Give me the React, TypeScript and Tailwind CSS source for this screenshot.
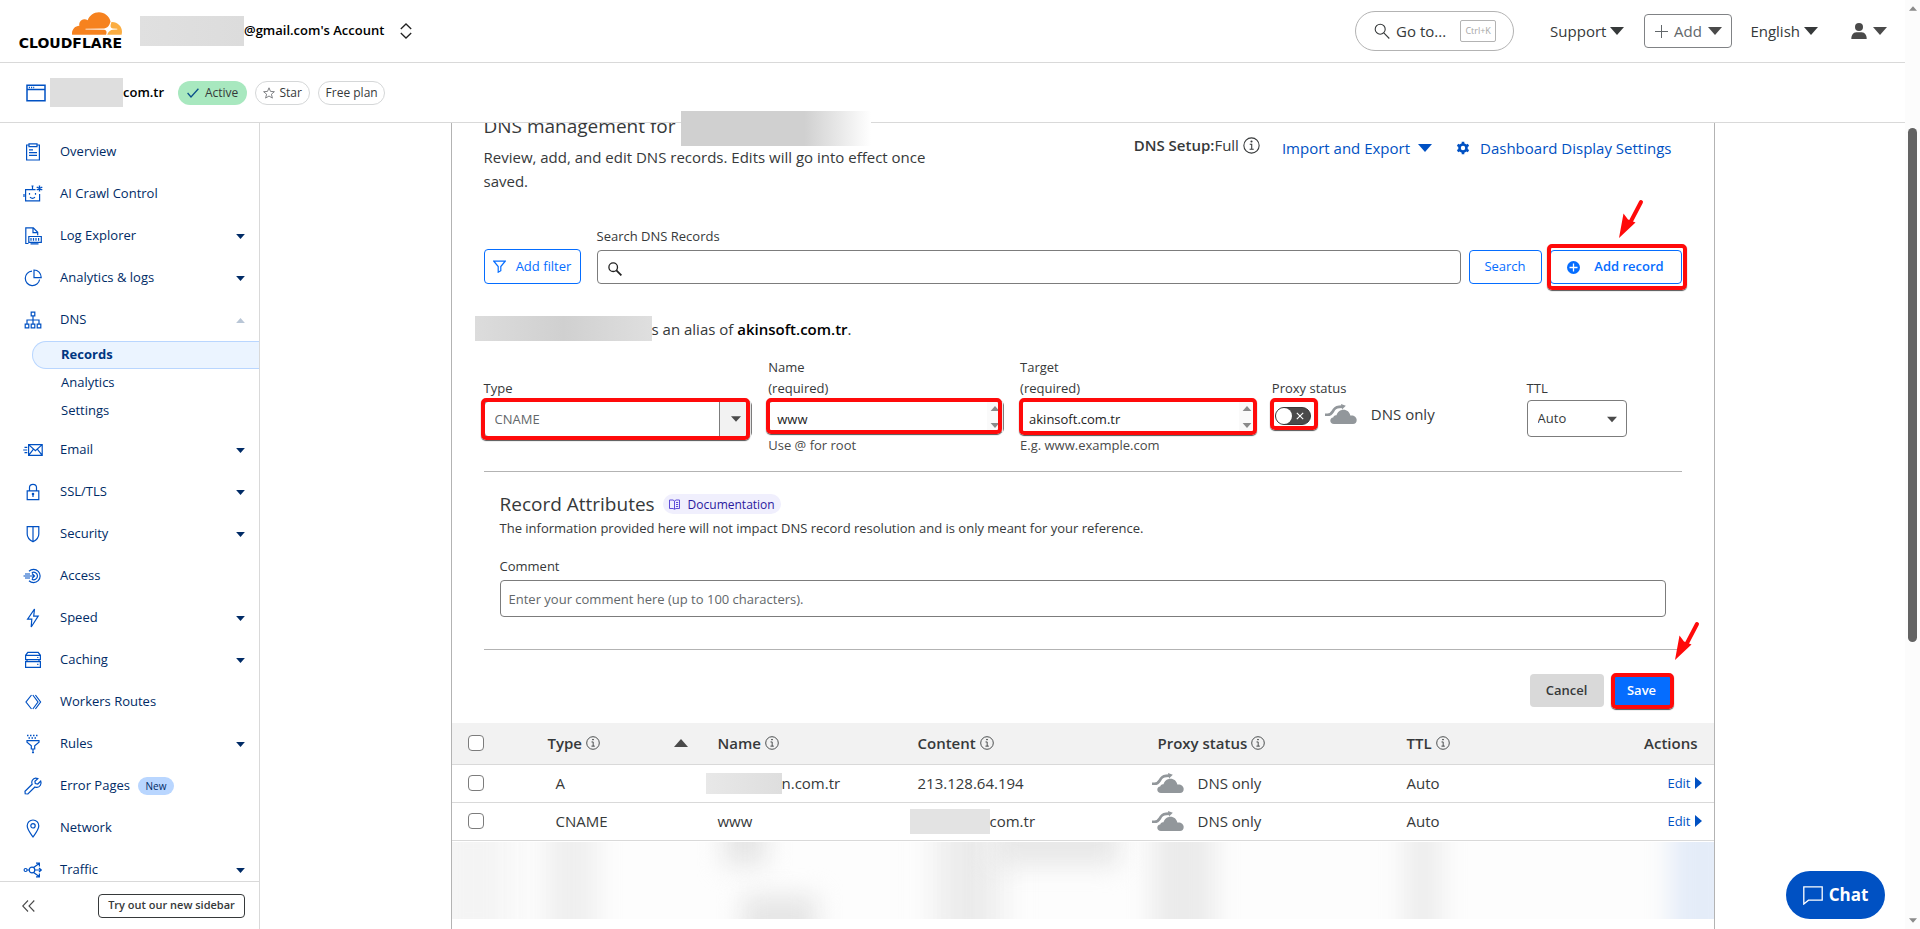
import { useState, type ReactNode } from 'react'
import { clsx } from 'clsx'

interface NavItem {
  label: string
  icon: ReactNode
  expandable?: boolean
  open?: boolean
  badge?: string
  children?: string[]
}

interface DnsRecord {
  id: string
  type: string
  name: ReactNode
  content: ReactNode
}

/* ---------- Small shared drawings ---------- */

function Caret({ className, up }: { className?: string; up?: boolean }) {
  return (
    <svg viewBox="0 0 14 8" className={clsx('shrink-0 fill-current', className)} aria-hidden="true">
      {up ? <path d="M0 8h14L7 0z" /> : <path d="M0 0h14L7 8z" />}
    </svg>
  )
}

function InfoIcon({ className }: { className?: string }) {
  return (
    <svg viewBox="0 0 16 16" className={clsx('shrink-0', className)} fill="none" stroke="currentColor" aria-hidden="true">
      <circle cx="8" cy="8" r="7.2" />
      <path d="M6.3 6.8h1.9v4.8M6.2 11.6h3.9" />
      <circle cx="8" cy="4.2" r="0.5" fill="currentColor" />
    </svg>
  )
}

function DnsOnlyCloud() {
  return (
    <svg viewBox="0 0 32 21" className="h-[21px] w-8 shrink-0" aria-hidden="true">
      <path
        fill="#92979b"
        d="M9 20c-2.300 0-3.700-1.300-3.700-3.200 0-1.700 1.100-3 2.900-3.200.2-1.500 1.600-2.600 3.300-2.300C12.500 8 15.200 5.800 18.500 5.800c3.500 0 6.200 2.300 6.800 5.700 3.300-.6 6.400 1.200 6.400 4.500 0 2.500-1.500 4-3.700 4z"
      />
      <path fill="none" stroke="#fff" strokeWidth="4.600" d="M4 10.400c3-.6 3.600-2.800 5-4.900C10.600 3.200 12.600 2.600 17 2.600" />
      <path fill="none" stroke="#92979b" strokeWidth="2.600" d="M0 10.800h2.500c4.500 0 4.700-2.800 6.500-5.300C10.600 3.200 12.600 2.600 17 2.600" />
      <path fill="#92979b" d="M16 0l4.800 1.800L17 5.600z" />
    </svg>
  )
}

function Redacted({ className }: { className?: string }) {
  return <span aria-hidden="true" className={clsx('block shrink-0', className)} />
}

function RedArrow({ className }: { className?: string }) {
  return (
    <svg viewBox="0 0 26 40" className={clsx('pointer-events-none absolute h-10 w-[26px]', className)} aria-hidden="true">
      <path d="M23 3L12 24" stroke="#ff0a0a" strokeWidth="4" strokeLinecap="round" />
      <path d="M1 39L5.500 14.500l4.500 6 7.500 3z" fill="#ff0a0a" />
    </svg>
  )
}

// Red frame drawn around a control
function Marked({ children, className, frame }: { children: ReactNode; className?: string; frame: string }) {
  return (
    <div className={clsx('relative', className)}>
      {children}
      <span
        aria-hidden="true"
        className={clsx('pointer-events-none absolute rounded-[5px] border-4 border-[#ff0a0a] shadow-[0_1px_1px_#555]', frame)}
      />
    </div>
  )
}

function Glyph({ children }: { children: ReactNode }) {
  return (
    <svg
      viewBox="0 0 20 20"
      className="size-5 shrink-0"
      fill="none"
      stroke="#0051c3"
      strokeWidth="1.2"
      aria-hidden="true"
    >
      {children}
    </svg>
  )
}

/* ---------- Sidebar data ---------- */

const navItems: NavItem[] = [
  {
    label: 'Overview',
    icon: (
      <Glyph>
        <path d="M6 3H3.600v15h12.800V3H14M6 1.800h8v2.800H6zM6 7.800h4M6 10.600h8M6 13.400h8" />
      </Glyph>
    ),
  },
  {
    label: 'AI Crawl Control',
    icon: (
      <Glyph>
        <path d="M12.500 5.600H2.600v11.200h14V10M9.500 5.600V2M8.500 2h2M6.500 9v1.800M12.500 9v1.800M7 13.300c1.500 1.200 3.500 1.200 5 0M1 10v3" />
        <path d="M16.500 1.500v6M13.700 3l5.600 3M19.300 3l-5.600 3" strokeWidth="1.400" />
      </Glyph>
    ),
  },
  {
    label: 'Log Explorer',
    expandable: true,
    icon: (
      <Glyph>
        <path d="M5.500 17.500H2.800V1.800h7.500l4.400 4.500v3M10 2v4.600h4.500M5.800 10.500h12.500v5.800H5.800zM7.500 17.800h8M8 12v2.800M10.500 12v2.800M13 12v2.800M15.600 12v2.800" />
      </Glyph>
    ),
  },
  {
    label: 'Analytics & logs',
    expandable: true,
    icon: (
      <Glyph>
        <path d="M9 3.200a7.200 7.200 0 1 0 7.600 8.300M11 2v7.600h7.200C18.200 5.200 15 2 11 2z" />
      </Glyph>
    ),
  },
  {
    label: 'DNS',
    expandable: true,
    open: true,
    children: ['Records', 'Analytics', 'Settings'],
    icon: (
      <Glyph>
        <path d="M8.200 2.200h3.600v3.600H8.200zM2.200 14.200h3.600v3.600H2.200zM8.200 14.200h3.600v3.600H8.200zM14.200 14.200h3.600v3.600h-3.600zM10 5.800v8.400M4 14.200V10h12v4.200" />
      </Glyph>
    ),
  },
  {
    label: 'Email',
    expandable: true,
    icon: (
      <Glyph>
        <path d="M5.600 4.600h13.600v10.800H5.600zM5.600 4.600l6.800 6 6.800-6M5.600 15.400l4.700-6M19.200 15.400l-4.700-6M1.500 7.300h2.800M0.200 10h4M1.500 12.700h2.800" />
      </Glyph>
    ),
  },
  {
    label: 'SSL/TLS',
    expandable: true,
    icon: (
      <Glyph>
        <path d="M4.200 8.800h11.600v8.800H4.200zM6.500 8.800V5.600c0-4.400 7-4.400 7 0v3.200M10 12v3" />
        <circle cx="10" cy="12" r="0.700" fill="#0051c3" />
      </Glyph>
    ),
  },
  {
    label: 'Security',
    expandable: true,
    icon: (
      <Glyph>
        <path d="M4.200 2.600h11.600v7.400c0 3.600-2.600 6.200-5.800 7.800-3.200-1.600-5.800-4.200-5.800-7.800zM10 2.600v15" />
      </Glyph>
    ),
  },
  {
    label: 'Access',
    icon: (
      <Glyph>
        <path d="M6 5.200a6.600 6.600 0 1 1 0 9.600M8.800 6.700a3.800 3.800 0 1 1 0 6.600M0.500 10h11M9 7.500l2.500 2.500L9 12.500M2 8h5M2 12h5" />
      </Glyph>
    ),
  },
  {
    label: 'Speed',
    expandable: true,
    icon: (
      <Glyph>
        <path d="M11.500 1L4.600 11.200h4.200L8.200 19l7-10.800h-4.500z" />
      </Glyph>
    ),
  },
  {
    label: 'Caching',
    expandable: true,
    icon: (
      <Glyph>
        <path d="M2.600 9.600V5.300l2.200-2.900h10.400l2.200 2.900v4.300zM2.600 5.300h14.800M2.600 11.600h14.800v5.800H2.600zM4 9.600v2M16 9.600v2M14.800 7v1M14.800 13.800v1.200" />
      </Glyph>
    ),
  },
  {
    label: 'Workers Routes',
    icon: (
      <Glyph>
        <path d="M8.500 3L3 10l5.500 7M9.800 3l5.200 7-5.200 7M12.400 3l5.200 7-5.200 7" />
      </Glyph>
    ),
  },
  {
    label: 'Rules',
    expandable: true,
    icon: (
      <Glyph>
        <path d="M4 1.500h12M5.500 4h9" strokeDasharray="1.500 1.500" strokeWidth="1.500" />
        <path d="M4 6.600h12v1.600l-4.300 3.600v3.200H8.300v-3.200L4 8.200zM10 15.500V17" />
        <circle cx="10" cy="18.300" r="1.100" fill="#0051c3" stroke="none" />
      </Glyph>
    ),
  },
  {
    label: 'Error Pages',
    badge: 'New',
    icon: (
      <Glyph>
        <path d="M14.800 2.600c-2-.9-4.400-.2-5.500 1.700-.7 1.300-.8 2.700-.2 4L2 15.200l.2 2.600 2.700.2 7-7c2 .8 4.300.2 5.500-1.700.8-1.300.9-2.800.3-4.200l-2.900 2.900-2.500-.4-.4-2.400z" />
      </Glyph>
    ),
  },
  {
    label: 'Network',
    icon: (
      <Glyph>
        <path d="M10 19c-3-4.200-5.800-7.600-5.800-11.200a5.800 5.800 0 0 1 11.600 0C15.800 11.400 13 14.800 10 19z" />
        <circle cx="10" cy="7.800" r="2.200" />
      </Glyph>
    ),
  },
  {
    label: 'Traffic',
    expandable: true,
    icon: (
      <Glyph>
        <circle cx="2.600" cy="10" r="1.500" />
        <circle cx="9" cy="10" r="2.800" />
        <path d="M4.100 10h2M11.800 10h6.500M16 8l2.300 2L16 12M10.600 7.600L16.200 3.400M10.600 12.400l5.600 4.200M13 3.200h3.400v3.200M13 16.800h3.400v-3.200" />
      </Glyph>
    ),
  },
]

const records: DnsRecord[] = [
  {
    id: 'root-a',
    type: 'A',
    name: (
      <span className="-ml-3 flex items-center">
        <Redacted className="h-[21px] w-[76px] bg-linear-to-r from-[#e8e8e8] to-[#dedede]" />
        n.com.tr
      </span>
    ),
    content: '213.128.64.194',
  },
  {
    id: 'www-cname',
    type: 'CNAME',
    name: 'www',
    content: (
      <span className="-ml-2 flex items-center">
        <Redacted className="h-[25px] w-20 bg-[#e3e3e3]" />
        com.tr
      </span>
    ),
  },
]

/* ---------- Header ---------- */

function CloudflareLogo() {
  return (
    <a href="#home" aria-label="Cloudflare" className="flex w-[105px] flex-col items-end">
      <svg viewBox="0 6.500 24 11" className="h-[23px] w-[50px]" aria-hidden="true">
        <path
          fill="#f6821f"
          d="M16.5088 16.8447c.1475-.5068.0908-.9707-.1553-1.3154-.2246-.3164-.6045-.499-1.0615-.5205l-8.6592-.1123a.1559.1559 0 0 1-.1333-.0713c-.0283-.042-.0351-.0986-.021-.1553.0278-.084.1123-.1484.2036-.1562l8.7359-.1123c1.0351-.0489 2.1601-.8868 2.5537-1.9136l.499-1.3013c.0215-.0561.0293-.1128.0147-.168-.5625-2.5463-2.835-4.4453-5.5499-4.4453-2.5039 0-4.6284 1.6177-5.3876 3.8614-.4927-.3658-1.1187-.5625-1.794-.499-1.2026.119-2.1665 1.083-2.2861 2.2856-.0283.31-.0069.6128.0635.894C1.5683 13.171 0 14.7754 0 16.752c0 .1748.0142.3515.0352.5273.0141.083.0844.1475.1689.1475h15.9814c.0909 0 .1758-.0645.2032-.1553z"
        />
        <path
          fill="#fbad41"
          d="M19.2656 11.2813c-.0771 0-.1611 0-.2383.0112-.0566 0-.1054.0415-.127.0976l-.3378 1.1744c-.1475.5068-.0918.9707.1543 1.3164.2256.3164.6055.498 1.0625.5195l1.8437.1133c.0557 0 .1055.0263.1329.0703.0283.043.0351.1074.0214.1562-.0283.084-.1132.1485-.204.1553l-1.921.1123c-1.041.0488-2.1582.8867-2.5527 1.914l-.1406.3585c-.0283.0713.0215.1416.0986.1416h6.5977c.0771 0 .1474-.0489.169-.126.1122-.4082.1757-.837.1757-1.2803 0-2.6025-2.125-4.727-4.7344-4.727z"
        />
      </svg>
      <span className="mt-px font-['DejaVu_Sans',sans-serif] text-[14px] leading-[14px] font-bold text-black">CLOUDFLARE</span>
    </a>
  )
}

function TopBar() {
  return (
    <header className="flex h-[63px] shrink-0 items-center border-b border-[#d9d9d9] pr-[18px] pl-[17px]">
      <CloudflareLogo />
      <button type="button" className="ml-[18px] flex items-center text-[13px] font-semibold text-black">
        <Redacted className="h-[30px] w-[104px] bg-linear-to-r from-[#e0e0e0] to-[#dcdcdc]" />
        @gmail.com's Account
        <svg viewBox="0 0 12 16" className="ml-4 h-4 w-3" fill="none" stroke="#222" strokeWidth="1.300" aria-hidden="true">
          <path d="M0.800 6L6 1l5.200 5M0.800 10L6 15l5.200-5" />
        </svg>
      </button>

      <div className="ml-auto flex items-center text-[15px] text-[#36393a]">
        <button
          type="button"
          className="flex h-10 w-[159px] items-center rounded-full border border-[#b3b3b3] pl-[18px]"
        >
          <svg viewBox="0 0 16 16" className="mr-1.5 size-4" fill="none" stroke="#36393a" strokeWidth="1.100" aria-hidden="true">
            <circle cx="6.200" cy="6.200" r="5" />
            <path d="M9.800 9.800L15.300 15.500" />
          </svg>
          Go to...
          <kbd className="ml-3.5 flex h-[22px] w-9 items-center justify-center rounded-xs border border-[#b3b3b3] font-['Open_Sans',sans-serif] text-[9px] text-[#a6a6a6]">
            Ctrl+K
          </kbd>
        </button>
        <button type="button" className="ml-9 flex items-center gap-1">
          Support
          <Caret className="h-2 w-3.5" />
        </button>
        <button
          type="button"
          className="ml-5 flex h-[34px] w-[88px] items-center justify-center gap-1.5 rounded-sm border border-[#808285] text-[#62676a]"
        >
          <svg viewBox="0 0 13 13" className="size-[13px]" stroke="currentColor" aria-hidden="true">
            <path d="M6.500 0v13M0 6.500h13" />
          </svg>
          Add
          <Caret className="h-2 w-3.5 text-[#4a4a4a]" />
        </button>
        <button type="button" className="ml-[18px] flex items-center gap-1">
          English
          <Caret className="h-2 w-3.5" />
        </button>
        <button type="button" aria-label="Profile" className="ml-[33px] flex items-center gap-1.5 text-[#4a4a4a]">
          <svg viewBox="0 0 16 16" className="size-4 fill-current" aria-hidden="true">
            <circle cx="8" cy="4" r="4" />
            <path d="M0.300 16c0-4 1.800-6.500 5-6.700h5.400c3.200.2 5 2.700 5 6.700z" />
          </svg>
          <Caret className="h-2 w-3.5" />
        </button>
      </div>
    </header>
  )
}

function ZoneBar() {
  return (
    <div className="flex h-[60px] shrink-0 items-center border-b border-[#d9d9d9] pl-[26px] text-[#36393a]">
      <svg viewBox="0 0 20 18" className="h-[18px] w-5" fill="none" stroke="#0051c3" strokeWidth="1.500" aria-hidden="true">
        <path d="M1 1.200h18v15.600H1zM1 5.600h18" />
        <path d="M2.800 3.400h5.400" strokeDasharray="1.200 1" />
      </svg>
      <Redacted className="ml-1 h-[29px] w-[73px] bg-[#dedede]" />
      <h2 className="text-[13px] font-semibold text-black">com.tr</h2>
      <span className="ml-3.5 flex h-6 w-[69px] items-center justify-center gap-1.5 rounded-full bg-[#a8e8bf] text-[12px]">
        <svg viewBox="0 0 12 10" className="h-2.5 w-3" fill="none" stroke="#0b4f8a" strokeWidth="1.300" aria-hidden="true">
          <path d="M0.600 5l3.400 4L11.400 0.800" />
        </svg>
        Active
      </span>
      <button
        type="button"
        className="ml-2 flex h-6 w-[55px] items-center justify-center gap-1 rounded-full border border-[#d5d7d8] text-[12px]"
      >
        <svg viewBox="0 0 12 12" className="size-3" fill="none" stroke="#808285" aria-hidden="true">
          <path d="M6 0.800l1.500 3.600 3.900.3-3 2.500 1 3.900L6 9l-3.400 2.100 1-3.900-3-2.500 3.900-.3z" />
        </svg>
        Star
      </button>
      <span className="ml-2 flex h-6 w-[67px] items-center justify-center rounded-full border border-[#d5d7d8] text-[12px]">
        Free plan
      </span>
    </div>
  )
}

/* ---------- Sidebar ---------- */

function Sidebar() {
  return (
    <aside className="flex w-[260px] shrink-0 flex-col border-r border-[#d9d9d9] text-[13px] text-[#003681]">
      <nav className="min-h-0 flex-1 overflow-hidden pt-2">
        <ul>
          {navItems.map((item) => (
            <li key={item.label}>
              <a href="#nav" className="flex h-[42px] items-center pr-3.5 pl-[23px] text-[#002b66]">
                {item.icon}
                <span className="ml-[17px]">{item.label}</span>
                {item.badge && (
                  <span className="ml-2 flex h-[18px] w-9 items-center justify-center rounded-full bg-[#b9d6ff] text-[10px]">
                    {item.badge}
                  </span>
                )}
                {item.expandable && (
                  <Caret up={item.open} className={clsx('ml-auto h-[5px] w-[9px]', item.open && 'text-[#b9c6d6]')} />
                )}
              </a>
              {item.children && (
                <ul className="mb-1">
                  {item.children.map((child, i) => (
                    <li key={child} className="pl-8">
                      <a
                        href="#nav"
                        aria-current={i === 0 ? 'page' : undefined}
                        className={clsx(
                          'flex h-7 items-center border pl-7',
                          i === 0
                            ? 'rounded-l-full border-r-0 border-[#b9d6ff] bg-[#ebf4ff] font-bold text-[#003681]'
                            : 'border-transparent text-[#002b66]'
                        )}
                      >
                        {child}
                      </a>
                    </li>
                  ))}
                </ul>
              )}
            </li>
          ))}
        </ul>
      </nav>
      <div className="flex h-12 shrink-0 items-center justify-between border-t border-[#d9d9d9] pr-3.5 pl-[22px]">
        <button type="button" aria-label="Collapse sidebar">
          <svg viewBox="0 0 13 12" className="h-3 w-[13px]" fill="none" stroke="#4a4a4a" strokeWidth="1.100" aria-hidden="true">
            <path d="M6 0.500L0.700 6 6 11.500M12.300 0.500L7 6l5.300 5.500" />
          </svg>
        </button>
        <button type="button" className="h-6 w-[147px] rounded-sm border border-[#36393a] text-[11px] font-semibold text-[#36393a]">
          Try out our new sidebar
        </button>
      </div>
    </aside>
  )
}

/* ---------- DNS page ---------- */

function IntroRow() {
  return (
    <div className="flex items-start justify-between">
      <div className="w-[472px]">
        <h1 className="text-[19px] leading-7">DNS management for</h1>
        <p className="mt-[5px] mb-px text-[15px] leading-6">
          Review, add, and edit DNS records. Edits will go into effect once saved.
        </p>
      </div>
      <div className="flex items-center pt-[21px] pr-2.5 text-[15px] leading-6">
        <span className="flex items-center pb-1.5">
          <span className="font-semibold">DNS Setup:</span>Full
          <InfoIcon className="ml-1 size-[17px]" />
        </span>
        <button type="button" className="ml-[22px] flex items-center text-[#0051c3]">
          Import and Export
          <Caret className="ml-2 h-2 w-3.5" />
        </button>
        <a href="#display" className="ml-6 flex items-center text-[#0051c3]">
          <svg viewBox="0 0 14 14" className="mr-2.5 size-3.5" aria-hidden="true">
            <circle cx="7" cy="7" r="3.500" fill="none" stroke="currentColor" strokeWidth="2.600" />
            <path
              d="M7 0.700v2.500M7 10.800v2.500M1.500 3.800l2.200 1.300M10.300 8.900l2.200 1.300M1.500 10.200l2.200-1.300M10.300 5.100l2.200-1.300"
              stroke="currentColor"
              strokeWidth="2.600"
            />
          </svg>
          Dashboard Display Settings
        </a>
      </div>
    </div>
  )
}

function SearchRow() {
  return (
    <form className="mt-8 flex items-end" onSubmit={(e) => e.preventDefault()}>
      <button
        type="button"
        className="flex h-[35px] w-[97px] items-center justify-center gap-2.5 rounded-sm border border-[#056dff] text-[13px] text-[#056dff]"
      >
        <svg viewBox="0 0 13 13" className="size-[13px]" fill="none" stroke="currentColor" strokeWidth="1.200" aria-hidden="true">
          <path d="M0.800 1.200h11.400L7.800 6.500v4.200l-2.600 1.500V6.500z" />
        </svg>
        Add filter
      </button>
      <div className="ml-4 flex-1">
        <label htmlFor="dns-search" className="mb-1 block text-[13px] leading-5">
          Search DNS Records
        </label>
        <div className="relative">
          <input
            id="dns-search"
            type="text"
            className="block h-[34px] w-full rounded-sm border border-[#7c7c7c] pr-3 pl-8 text-[13px] outline-none"
          />
          <svg
            viewBox="0 0 14 14"
            className="pointer-events-none absolute top-3 left-[11px] size-3.5"
            fill="none"
            stroke="#222"
            strokeWidth="1.300"
            aria-hidden="true"
          >
            <circle cx="5.200" cy="5.200" r="4.300" />
            <path d="M8.400 8.400l5 5" strokeWidth="1.800" />
          </svg>
        </div>
      </div>
      <button type="submit" className="ml-2 h-[34px] w-[73px] rounded-sm border border-[#056dff] text-[13px] text-[#056dff]">
        Search
      </button>
      <Marked className="ml-2" frame="-right-[5px] -left-[3px] -top-[6px] -bottom-[6px]">
        <button
          type="button"
          className="flex h-[34px] w-[132px] items-center justify-center gap-3.5 rounded-sm border border-[#056dff] text-[13px] font-semibold text-[#056dff]"
        >
          <svg viewBox="0 0 13 13" className="size-[13px]" aria-hidden="true">
            <circle cx="6.500" cy="6.500" r="6.500" fill="currentColor" />
            <path d="M6.500 2.500v8M2.500 6.500h8" stroke="#fff" strokeWidth="1.300" />
          </svg>
          Add record
        </button>
        <RedArrow className="-top-[51px] left-[68px]" />
      </Marked>
    </form>
  )
}

// Multi-line field with its own tiny scroll arrows
function ScrollField({ id, defaultValue }: { id: string; defaultValue: string }) {
  return (
    <>
      <textarea
        id={id}
        rows={1}
        defaultValue={defaultValue}
        className="block h-8 w-full resize-none overflow-hidden rounded-sm border border-[#7c7c7c] py-[7px] pl-2 text-[13px] leading-5 text-[#222] outline-none"
      />
      <span
        aria-hidden="true"
        className="pointer-events-none absolute inset-y-px right-px flex w-4 flex-col items-center justify-between bg-[#fafafa] py-1 text-[#8a8a8a]"
      >
        <Caret up className="h-[5px] w-2.5" />
        <Caret className="h-[5px] w-2.5" />
      </span>
    </>
  )
}

function RecordForm() {
  const [proxied, setProxied] = useState(false)

  return (
    <div className="grid grid-cols-[269fr_236fr_236fr_239fr_100fr_39fr] gap-4 border-b border-[#b3b3b3] pt-4 pb-[15px] text-[13px] leading-[21px]">
      <div className="pt-[21px]">
        <label htmlFor="record-type" className="block">Type</label>
        <Marked className="mt-0.5" frame="-top-[3px] -bottom-[3px] -left-[3px] right-0.5">
          <select
            id="record-type"
            className="block h-9 w-full appearance-none rounded-sm border border-[#7c7c7c] bg-white pl-2.5 text-[#62676a] outline-none"
          >
            <option>CNAME</option>
            <option>A</option>
          </select>
          <span
            aria-hidden="true"
            className="pointer-events-none absolute inset-y-px right-px flex w-8 items-center justify-center border-l border-[#7c7c7c] bg-[#f2f2f2] text-[#4a4a4a]"
          >
            <Caret className="h-1.5 w-2.5" />
          </span>
        </Marked>
      </div>

      <div>
        <label htmlFor="record-name" className="block">
          Name
          <br />
          (required)
        </label>
        <Marked className="mt-0.5" frame="-top-[3px] -bottom-px -left-0.5 right-0.5">
          <ScrollField id="record-name" defaultValue="www" />
        </Marked>
        <p className="mt-0.5 text-[#4a4a4a]">Use @ for root</p>
      </div>

      <div>
        <label htmlFor="record-target" className="block">
          Target
          <br />
          (required)
        </label>
        <Marked className="mt-0.5" frame="-top-[3px] -bottom-0.5 -inset-x-px">
          <ScrollField id="record-target" defaultValue="akinsoft.com.tr" />
        </Marked>
        <p className="mt-0.5 text-[#4a4a4a]">E.g. www.example.com</p>
      </div>

      <div className="pt-[21px]">
        <label htmlFor="record-proxy" className="block">Proxy status</label>
        <div className="flex items-center">
          <Marked className="mt-2 ml-[3px] shrink-0" frame="-top-[9px] -bottom-[5px] -right-[7px] -left-[5px]">
            <input
              id="record-proxy"
              type="checkbox"
              role="switch"
              checked={proxied}
              onChange={(e) => setProxied(e.target.checked)}
              className="block h-[18px] w-9 appearance-none rounded-full border border-[#36393a] bg-[#4a4a4a]"
            />
            <span
              aria-hidden="true"
              className={clsx(
                'pointer-events-none absolute top-px size-4 rounded-full bg-white',
                proxied ? 'right-px' : 'left-px'
              )}
            />
            <svg
              viewBox="0 0 8 8"
              className="pointer-events-none absolute top-[5px] right-[7px] size-2"
              stroke="#fff"
              strokeWidth="1.100"
              aria-hidden="true"
            >
              <path d="M0.800 0.800l6.400 6.400M7.200 0.800L0.800 7.200" />
            </svg>
          </Marked>
          <span className="mt-1 ml-3.5 flex items-center gap-3.5 text-[15px]">
            <DnsOnlyCloud />
            DNS only
          </span>
        </div>
      </div>

      <div className="pt-[21px]">
        <label htmlFor="record-ttl" className="block">TTL</label>
        <div className="relative mt-px">
          <select
            id="record-ttl"
            className="block h-[37px] w-full appearance-none rounded-sm border border-[#7c7c7c] bg-white pl-2.5 outline-none"
          >
            <option>Auto</option>
            <option>1 min</option>
          </select>
          <Caret className="pointer-events-none absolute top-4 right-2.5 h-[7px] w-2.5 text-[#4a4a4a]" />
        </div>
      </div>
    </div>
  )
}

function RecordAttributes() {
  return (
    <div className="border-b border-[#b3b3b3] px-4 pt-[18px] pb-8 text-[13px] leading-[21px]">
      <div className="flex items-center gap-2">
        <h3 className="text-[19px] leading-7">Record Attributes</h3>
        <a
          href="#docs"
          className="flex h-5 w-[118px] items-center justify-center gap-2 rounded-full bg-[#f0effd] text-[12px] text-[#2a1a9e]"
        >
          <svg viewBox="0 0 11 11" className="size-[11px]" fill="none" stroke="#5e4dd8" aria-hidden="true">
            <path d="M0.500 1h3.500l1.500 1L7 1h3.500v8.500H7l-1.500.8-1.500-.8H0.500zM5.500 2v8M7 3.500h2.200M7 5.500h2.200M7 7.500h2.200" />
          </svg>
          Documentation
        </a>
      </div>
      <p>The information provided here will not impact DNS record resolution and is only meant for your reference.</p>
      <label htmlFor="record-comment" className="mt-[17px] block">
        Comment
      </label>
      <input
        id="record-comment"
        type="text"
        placeholder="Enter your comment here (up to 100 characters)."
        className="mt-[3px] block h-[37px] w-full rounded-sm border border-[#7c7c7c] px-2 text-[13px] outline-none placeholder:text-[#62676a]"
      />
    </div>
  )
}

function Check({ label }: { label: string }) {
  return (
    <input type="checkbox" aria-label={label} className="block size-4 appearance-none rounded-sm border border-[#7c7c7c] bg-white" />
  )
}

function HeadLabel({ children }: { children: ReactNode }) {
  return (
    <span className="flex items-center gap-1">
      {children}
      <InfoIcon className="size-3.5" />
    </span>
  )
}

function RecordsTable() {
  return (
    <table className="mt-4 w-full table-fixed text-left text-[15px] leading-6">
      <colgroup>
        <col className="w-24" />
        <col className="w-[170px]" />
        <col className="w-[200px]" />
        <col className="w-[234px]" />
        <col className="w-[255px]" />
        <col />
        <col className="w-[127px]" />
      </colgroup>
      <thead>
        <tr className="h-[41px] border-b border-[#d9d9d9] bg-[#f2f2f2]">
          <th className="pl-4"><Check label="Select all records" /></th>
          <th className="font-semibold">
            <span className="flex items-center justify-between pr-[30px]">
              <HeadLabel>Type</HeadLabel>
              <Caret up className="h-2 w-3.5 text-[#4a4a4a]" />
            </span>
          </th>
          <th className="font-semibold"><HeadLabel>Name</HeadLabel></th>
          <th className="font-semibold"><HeadLabel>Content</HeadLabel></th>
          <th className="pl-1.5 font-semibold"><HeadLabel>Proxy status</HeadLabel></th>
          <th className="font-semibold"><HeadLabel>TTL</HeadLabel></th>
          <th className="pr-4 text-right font-semibold">Actions</th>
        </tr>
      </thead>
      <tbody>
        {records.map((record) => (
          <tr key={record.id} className="h-[38px] border-b border-[#d9d9d9]">
            <td className="pl-4"><Check label={`Select ${record.type} record`} /></td>
            <td className="pl-2">{record.type}</td>
            <td>{record.name}</td>
            <td>{record.content}</td>
            <td>
              <span className="flex items-center gap-3.5">
                <DnsOnlyCloud />
                DNS only
              </span>
            </td>
            <td>Auto</td>
            <td className="pr-3">
              <a href="#edit" className="flex items-center justify-end gap-1 text-[13px] text-[#0051c3]">
                Edit
                <svg viewBox="0 0 7 12" className="h-3 w-[7px] fill-current" aria-hidden="true">
                  <path d="M0 0l7 6-7 6z" />
                </svg>
              </a>
            </td>
          </tr>
        ))}
      </tbody>
    </table>
  )
}

// Rows hidden behind a soft smear
function HiddenRows() {
  return (
    <div aria-hidden="true" className="relative mt-px h-[77px] shrink-0 overflow-hidden bg-[#fdfdfd]">
      <span className="absolute -inset-y-8 -left-4 w-[6%] bg-[#f4f4f4] blur-lg" />
      <span className="absolute -inset-y-8 left-[7.500%] w-[4%] bg-[#efefef] blur-md" />
      <span className="absolute -top-8 left-[21.500%] h-14 w-[3.500%] bg-[#e6e6e6] blur-md" />
      <span className="absolute -bottom-8 left-[23%] h-14 w-[6%] bg-[#e6e6e6] blur-md" />
      <span className="absolute -inset-y-8 left-[38.500%] w-[5%] bg-[#ebebeb] blur-lg" />
      <span className="absolute -top-8 left-[43%] h-14 w-[10%] bg-[#e8e8e8] blur-md" />
      <span className="absolute -inset-y-8 left-[55.500%] w-[5%] bg-[#ebebeb] blur-md" />
      <span className="absolute -inset-y-8 left-[75.500%] w-[3%] bg-[#ededed] blur-md" />
      <span className="absolute -inset-y-8 -right-5 w-[5%] bg-[#e4ecf8] blur-md" />
    </div>
  )
}

function ScrollTrack() {
  return (
    <div aria-hidden="true" className="flex w-[15px] shrink-0 flex-col items-center bg-[#fcfcfc] py-1.5 text-[#8a8a8a]">
      <Caret up className="h-[5px] w-2" />
      <span className="min-h-0 w-full flex-[117]" />
      <span className="min-h-0 w-[9px] flex-[514] rounded-full bg-[#636363]" />
      <span className="min-h-0 w-full flex-[276]" />
      <Caret className="h-[5px] w-2" />
    </div>
  )
}

export default function App() {
  return (
    <div className="flex h-screen overflow-hidden bg-white font-['Open_Sans','Noto_Sans',sans-serif] text-[#36393a]">
      <div className="flex min-w-0 flex-1 flex-col">
        <TopBar />
        <ZoneBar />
        <div className="relative flex min-h-0 flex-1">
          <Sidebar />
          <main className="flex min-w-0 flex-1 justify-center overflow-hidden">
            <div className="relative w-full max-w-[1264px] border-x border-[#b3b3b3]">
              <div className="-mt-[11px] px-8">
                <IntroRow />
                <SearchRow />
                <p className="mt-8 -ml-[9px] flex items-center text-[15px] leading-6">
                  <Redacted className="h-[25px] w-[177px] bg-linear-to-r from-[#dcdcdc] via-[#d0d0d0] to-[#dfdfdf]" />
                  <span>
                    s an alias of <strong className="font-semibold text-black">akinsoft.com.tr</strong>.
                  </span>
                </p>
                <RecordForm />
                <RecordAttributes />
                <div className="mt-6 flex justify-end gap-2 pr-2.5">
                  <button type="button" className="h-[33px] w-[74px] rounded-sm bg-[#d9d9d9] text-[13px] font-semibold">
                    Cancel
                  </button>
                  <Marked frame="-right-0.5 -left-px -top-px -bottom-0.5">
                    <button type="button" className="block h-[33px] w-[60px] rounded-sm bg-[#056dff] text-[13px] font-semibold text-white">
                      Save
                    </button>
                    <RedArrow className="-top-[53px] left-[62px]" />
                  </Marked>
                </div>
              </div>
              <RecordsTable />
              <HiddenRows />
              <div className="px-4 pt-2.5">
                <Check label="Select record" />
              </div>
            </div>
          </main>
          {/* zone name smear next to the page title */}
          <span
            aria-hidden="true"
            className="absolute -top-3 left-[681px] h-[35px] w-[190px] bg-linear-to-r from-[#d0d0d0] from-65% to-white"
          />
        </div>
      </div>
      <ScrollTrack />
      <button
        type="button"
        className="fixed right-[35px] bottom-2.5 flex h-12 w-[99px] items-center justify-center gap-1.5 rounded-full bg-[#0051c3] text-[17px] font-bold text-white"
      >
        <svg viewBox="0 0 20 19" className="h-[19px] w-5" fill="none" stroke="currentColor" strokeWidth="1.300" aria-hidden="true">
          <path d="M0.800 0.800h18.400v13.400H5.500L0.800 18z" />
        </svg>
        Chat
      </button>
    </div>
  )
}
